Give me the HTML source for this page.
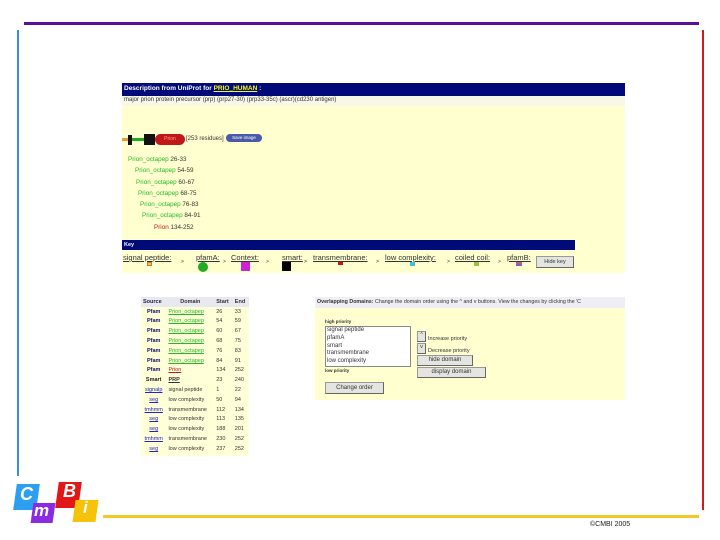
<!DOCTYPE html>
<html><head><meta charset="utf-8"><style>
*{margin:0;padding:0;box-sizing:border-box}
body{width:720px;height:540px;background:#fff;position:relative;overflow:hidden;font-family:"Liberation Sans",sans-serif;font-size:6px;color:#333}
.a{position:absolute}
.g{color:#22bb22}
.u{text-decoration:underline}
table{border-collapse:collapse}
td{font-size:5.5px;height:9.8px;padding:0 2px;white-space:nowrap}
.btn{position:absolute;background:#e4e4e0;border:1px solid #999;border-right-color:#666;border-bottom-color:#666;font-size:6px;text-align:center;color:#333}
.k{position:absolute;top:253px;font-size:7.5px;text-decoration:underline;white-space:nowrap;color:#333}
.gt{position:absolute;top:259px;font-size:5px}
</style></head><body>
<div class="a" style="left:24px;top:22px;width:675px;height:3px;background:#5a0f9e"></div>
<div class="a" style="left:17px;top:30px;width:2px;height:446px;background:#3a90d8"></div>
<div class="a" style="left:702px;top:30px;width:2px;height:480px;background:#d41a1a"></div>
<div class="a" style="left:103px;top:515px;width:596px;height:3px;background:#f4c826"></div>
<div class="a" style="left:590px;top:521px;font-size:7px;color:#222">©CMBI 2005</div>
<!-- logo -->
<div class="a" style="left:15px;top:484px;width:23px;height:26px;background:#2d9ff0;transform:skewX(-8deg)"></div>
<div class="a" style="left:20px;top:484px;color:#fff;font-size:18px;font-style:italic;font-weight:bold">C</div>
<div class="a" style="left:57px;top:482px;width:23px;height:26px;background:#e01818;transform:skewX(-8deg)"></div>
<div class="a" style="left:63px;top:481px;color:#fff;font-size:18px;font-style:italic;font-weight:bold">B</div>
<div class="a" style="left:32px;top:503px;width:22px;height:20px;background:#8a2be2;transform:skewX(-8deg)"></div>
<div class="a" style="left:34px;top:501px;color:#fff;font-size:17px;font-style:italic;font-weight:bold">m</div>
<div class="a" style="left:74px;top:500px;width:23px;height:22px;background:#f6c20a;transform:skewX(-8deg)"></div>
<div class="a" style="left:83px;top:498px;color:#fff;font-size:17px;font-style:italic;font-weight:bold">i</div>

<!-- top panel -->
<div class="a" style="left:122px;top:83px;width:503px;height:190px;background:#ffffd0"></div>
<div class="a" style="left:122px;top:83px;width:503px;height:13px;background:#000a78;color:#fff;font-size:6.5px;font-weight:bold;padding:2px 2px">Description from UniProt for <span class="u" style="color:#ff0">PRIO_HUMAN</span> :</div>
<div class="a" style="left:122px;top:96px;width:503px;height:10px;background:#f8f8e8;font-size:6px;padding:1px 2px">major prion protein precursor (prp) (prp27-30) (prp33-35c) (ascr)(cd230 antigen)</div>
<div class="a" style="left:122px;top:138px;width:12px;height:3px;background:#e0a040"></div>
<div class="a" style="left:128px;top:135px;width:4px;height:10px;background:#111"></div>
<div class="a" style="left:132px;top:138px;width:12px;height:3px;background:#22aa22"></div>
<div class="a" style="left:144px;top:134px;width:11px;height:11px;background:#111"></div>
<div class="a" style="left:155px;top:134px;width:30px;height:11px;background:#c01818;border-radius:6px;color:#f99;font-size:5px;text-align:center;line-height:11px">Prion</div>
<div class="a" style="left:186px;top:136px;font-size:6px">[253 residues]</div>
<div class="a" style="left:226px;top:134px;width:36px;height:8px;background:#4a5aa8;border-radius:5px;color:#fff;font-size:4.5px;text-align:center;line-height:8px">Save image</div>
<div class="a" style="left:128px;top:154px;line-height:11.3px;font-size:6.3px">
<div><span class="g">Prion_octapep</span> 26-33</div>
<div style="padding-left:7px"><span class="g">Prion_octapep</span> 54-59</div>
<div style="padding-left:8px"><span class="g">Prion_octapep</span> 60-67</div>
<div style="padding-left:10px"><span class="g">Prion_octapep</span> 68-75</div>
<div style="padding-left:12px"><span class="g">Prion_octapep</span> 76-83</div>
<div style="padding-left:14px"><span class="g">Prion_octapep</span> 84-91</div>
<div style="padding-left:26px"><span style="color:#c01818">Prion</span> 134-252</div>
</div>
<div class="a" style="left:122px;top:240px;width:453px;height:10px;background:#000a78;color:#fff;font-weight:bold;font-size:5.5px;padding:2px 2px">Key</div>
<div class="k" style="left:123px">signal peptide:</div><div class="gt" style="left:181px">&gt;</div>
<div class="k" style="left:196px">pfamA:</div><div class="gt" style="left:223px">&gt;</div>
<div class="k" style="left:231px">Context:</div><div class="gt" style="left:266px">&gt;</div>
<div class="k" style="left:282px">smart:</div><div class="gt" style="left:304px">&gt;</div>
<div class="k" style="left:313px">transmembrane:</div><div class="gt" style="left:376px">&gt;</div>
<div class="k" style="left:385px">low complexity:</div><div class="gt" style="left:447px">&gt;</div>
<div class="k" style="left:455px">coiled coil:</div><div class="gt" style="left:498px">&gt;</div>
<div class="k" style="left:507px">pfamB:</div>
<div class="a" style="left:147px;top:262px;width:5px;height:4px;border:1px solid #c08030;background:#f0c060"></div>
<div class="a" style="left:198px;top:262px;width:10px;height:10px;border-radius:50%;background:#22aa22"></div>
<div class="a" style="left:241px;top:262px;width:9px;height:9px;background:#d020d0"></div>
<div class="a" style="left:282px;top:262px;width:9px;height:9px;background:#000"></div>
<div class="a" style="left:338px;top:262px;width:5px;height:3px;background:#c01818"></div>
<div class="a" style="left:410px;top:262px;width:5px;height:4px;background:#40c0d0"></div>
<div class="a" style="left:474px;top:262px;width:5px;height:4px;background:#a0c040"></div>
<div class="a" style="left:516px;top:262px;width:6px;height:4px;background:linear-gradient(#e06060,#6060e0)"></div>
<div class="btn" style="left:536px;top:256px;width:38px;height:12px;line-height:10px;font-size:5.5px">Hide key</div>

<!-- table -->
<div class="a" style="left:141px;top:297px;width:108px;height:159px;background:#ffffd8"></div>
<table class="a" style="left:141px;top:297px;width:108px">
<tr style="background:#e8e8f0;font-weight:bold"><td style="color:#224"><b>Source</b></td><td style="text-align:center"><b>Domain</b></td><td><b>Start</b></td><td><b>End</b></td></tr>
<tr><td style="color:#116;font-weight:bold;text-align:center">Pfam</td><td class="g u">Prion_octapep</td><td>26</td><td>33</td></tr>
<tr><td style="color:#116;font-weight:bold;text-align:center">Pfam</td><td class="g u">Prion_octapep</td><td>54</td><td>59</td></tr>
<tr><td style="color:#116;font-weight:bold;text-align:center">Pfam</td><td class="g u">Prion_octapep</td><td>60</td><td>67</td></tr>
<tr><td style="color:#116;font-weight:bold;text-align:center">Pfam</td><td class="g u">Prion_octapep</td><td>68</td><td>75</td></tr>
<tr><td style="color:#116;font-weight:bold;text-align:center">Pfam</td><td class="g u">Prion_octapep</td><td>76</td><td>83</td></tr>
<tr><td style="color:#116;font-weight:bold;text-align:center">Pfam</td><td class="g u">Prion_octapep</td><td>84</td><td>91</td></tr>
<tr><td style="color:#116;font-weight:bold;text-align:center">Pfam</td><td class="u" style="color:#c01818">Prion</td><td>134</td><td>252</td></tr>
<tr><td style="color:#222;font-weight:bold;text-align:center">Smart</td><td class="u" style="font-weight:bold">PRP</td><td>23</td><td>240</td></tr>
<tr><td class="u" style="color:#22c;text-align:center">signalp</td><td>signal peptide</td><td>1</td><td>22</td></tr>
<tr><td class="u" style="color:#22c;text-align:center">seg</td><td>low complexity</td><td>50</td><td>94</td></tr>
<tr><td class="u" style="color:#22c;text-align:center">tmhmm</td><td>transmembrane</td><td>112</td><td>134</td></tr>
<tr><td class="u" style="color:#22c;text-align:center">seg</td><td>low complexity</td><td>113</td><td>135</td></tr>
<tr><td class="u" style="color:#22c;text-align:center">seg</td><td>low complexity</td><td>188</td><td>201</td></tr>
<tr><td class="u" style="color:#22c;text-align:center">tmhmm</td><td>transmembrane</td><td>230</td><td>252</td></tr>
<tr><td class="u" style="color:#22c;text-align:center">seg</td><td>low complexity</td><td>237</td><td>252</td></tr>
</table>

<!-- right panel -->
<div class="a" style="left:315px;top:297px;width:310px;height:103px;background:#ffffd0"></div>
<div class="a" style="left:315px;top:297px;width:310px;height:11px;background:#eeeef4;font-size:5.3px;padding:2px 2px;white-space:nowrap;overflow:hidden"><b>Overlapping Domains:</b> Change the domain order using the ^ and v buttons. View the changes by clicking the 'C</div>
<div class="a" style="left:325px;top:319px;font-size:4.5px;font-weight:bold">high priority</div>
<div class="a" style="left:325px;top:326px;width:86px;height:41px;background:#fff;border:1px solid #888;font-size:6px;line-height:7.8px;padding:0 1px">signal peptide<br>pfamA<br>smart<br>transmembrane<br>low complexity</div>
<div class="a" style="left:325px;top:368px;font-size:4.5px;font-weight:bold">low priority</div>
<div class="btn" style="left:417px;top:331px;width:9px;height:11px;font-size:5px">^</div>
<div class="a" style="left:428px;top:336px;font-size:5.5px">Increase priority</div>
<div class="btn" style="left:417px;top:343px;width:9px;height:11px;font-size:5.5px">v</div>
<div class="a" style="left:428px;top:348px;font-size:5.5px">Decrease priority</div>
<div class="btn" style="left:417px;top:355px;width:56px;height:11px;font-size:6px;line-height:9px">hide domain</div>
<div class="btn" style="left:417px;top:367px;width:69px;height:11px;font-size:6px;line-height:9px">display domain</div>
<div class="btn" style="left:325px;top:382px;width:59px;height:12px;font-size:6px;line-height:10px">Change order</div>
</body></html>
